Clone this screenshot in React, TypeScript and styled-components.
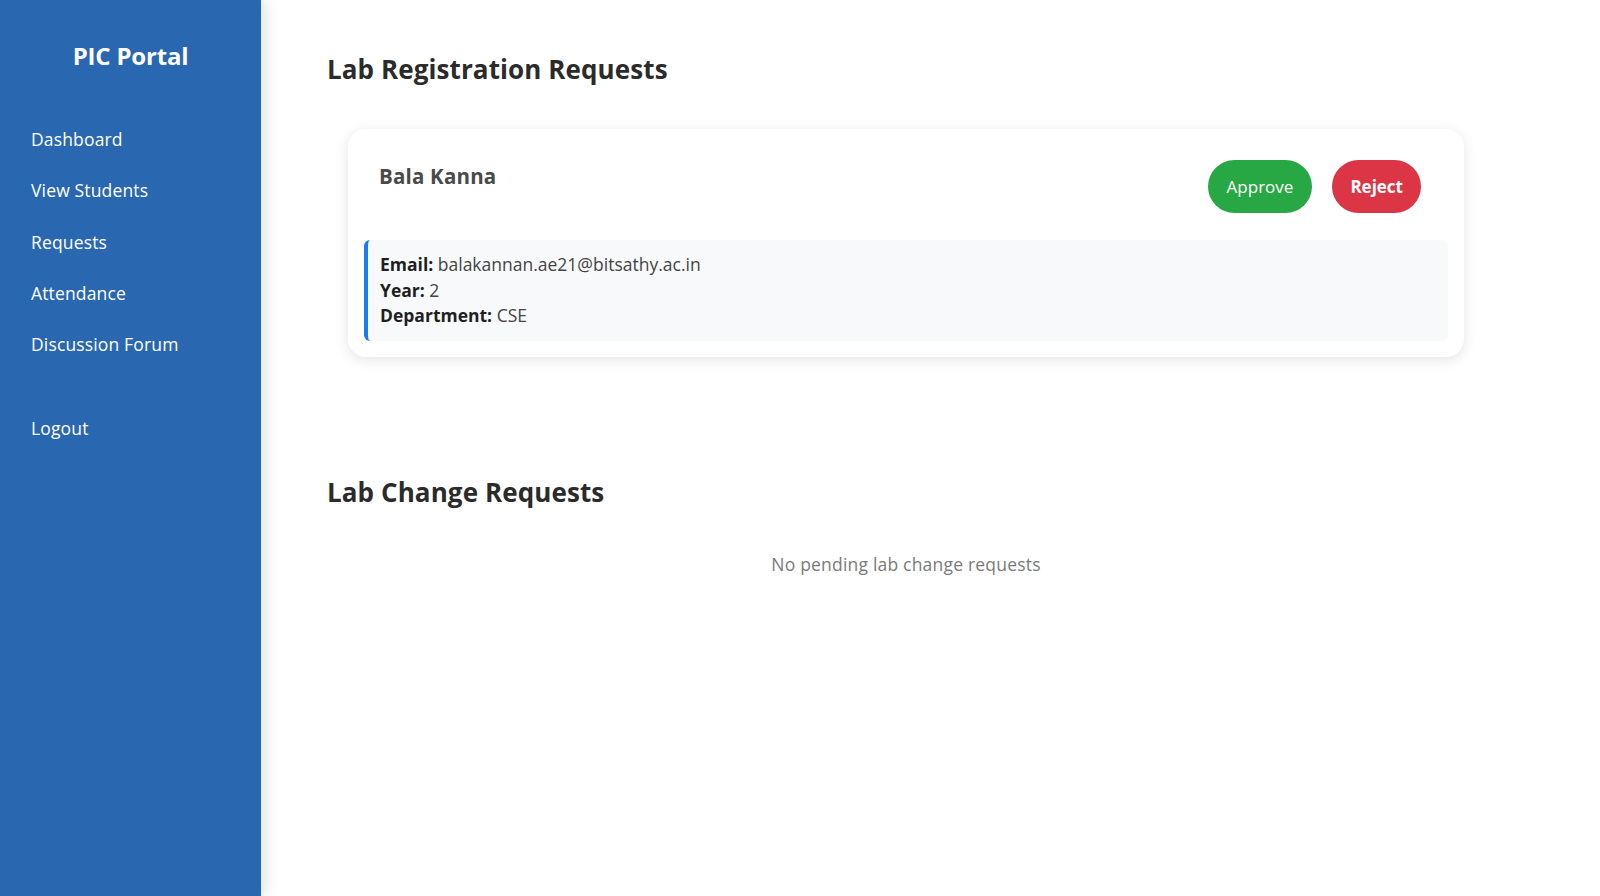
import styled, { createGlobalStyle } from 'styled-components';

const GlobalStyle = createGlobalStyle`
  * {
    box-sizing: border-box;
  }
  body {
    margin: 0;
    font-family: 'Open Sans', 'Liberation Sans', sans-serif;
    background: #ffffff;
  }
`;

const Layout = styled.div`
  display: flex;
  min-height: 896px;
`;

const Sidebar = styled.aside`
  width: 261px;
  flex-shrink: 0;
  background: #2a67b1;
  color: #ffffff;
  padding: 36px 0 0 31px;
  box-shadow: 4px 0 14px rgba(0, 0, 0, 0.12);
  position: relative;
  z-index: 1;
`;

const Brand = styled.h1`
  margin: 0 0 49px -31px;
  text-align: center;
  font-size: 24px;
  line-height: 40px;
  font-weight: 700;
  letter-spacing: -0.2px;
`;

const NavList = styled.nav`
  display: flex;
  flex-direction: column;
`;

const NavLink = styled.a<{ $spaced?: boolean }>`
  display: block;
  color: #ffffff;
  text-decoration: none;
  font-size: 17.5px;
  line-height: 24px;
  height: 51.3px;
  padding-top: 2px;
  margin-top: ${({ $spaced }) => ($spaced ? '33px' : '0')};
  letter-spacing: 0.15px;
`;

const Main = styled.main`
  flex: 1;
  padding: 49px 115px 40px 66px;
`;

const Section = styled.section`
  margin-bottom: 115px;
`;

const SectionTitle = styled.h2`
  margin: 0 0 40px;
  font-size: 26px;
  line-height: 40px;
  font-weight: 700;
  color: #2b2b2b;
  letter-spacing: 0.1px;
`;

const Card = styled.div`
  margin: 0 21px;
  background: #ffffff;
  border-radius: 18px;
  box-shadow: 0 3px 14px rgba(0, 0, 0, 0.11);
  padding: 16px;
`;

const CardHeader = styled.div`
  display: flex;
  justify-content: space-between;
  align-items: flex-start;
  padding: 15px 27px 15px 15px;
  margin-bottom: 12px;
`;

const StudentName = styled.h3`
  margin: 3px 0 0;
  font-size: 20.5px;
  line-height: 26px;
  font-weight: 700;
  color: #4a4a4a;
  letter-spacing: 0.2px;
`;

const Actions = styled.div`
  display: flex;
  gap: 20px;
`;

const ActionButton = styled.button<{ $tone: 'approve' | 'reject' }>`
  border: none;
  border-radius: 27px;
  height: 53px;
  padding: 0 ${({ $tone }) => ($tone === 'approve' ? '19px' : '18px')};
  font-family: inherit;
  font-size: 17px;
  color: #ffffff;
  cursor: pointer;
  background: ${({ $tone }) => ($tone === 'approve' ? '#28a745' : '#dc3545')};
  font-weight: ${({ $tone }) => ($tone === 'approve' ? 400 : 700)};
`;

const InfoBox = styled.div`
  background: #f8f9fa;
  border-left: 4px solid #1a7cf0;
  border-radius: 6px;
  padding: 12px;
`;

const InfoLine = styled.p`
  margin: 0;
  font-size: 17.5px;
  line-height: 25.5px;
  color: #444444;
`;

const Label = styled.strong`
  color: #1f1f1f;
  font-weight: 700;
`;

const EmptyText = styled.p`
  margin: 1px 0 0;
  text-align: center;
  font-size: 17.5px;
  line-height: 24px;
  color: #7a7a7a;
  letter-spacing: 0.2px;
`;

const navItems = ['Dashboard', 'View Students', 'Requests', 'Attendance', 'Discussion Forum'];

export default function App() {
  return (
    <>
      <GlobalStyle />
      <Layout>
        <Sidebar>
          <Brand>PIC Portal</Brand>
          <NavList>
            {navItems.map((item) => (
              <NavLink key={item} href="#">
                {item}
              </NavLink>
            ))}
            <NavLink href="#" $spaced>
              Logout
            </NavLink>
          </NavList>
        </Sidebar>
        <Main>
          <Section>
            <SectionTitle>Lab Registration Requests</SectionTitle>
            <Card>
              <CardHeader>
                <StudentName>Bala Kanna</StudentName>
                <Actions>
                  <ActionButton $tone="approve">Approve</ActionButton>
                  <ActionButton $tone="reject">Reject</ActionButton>
                </Actions>
              </CardHeader>
              <InfoBox>
                <InfoLine>
                  <Label>Email:</Label> balakannan.ae21@bitsathy.ac.in
                </InfoLine>
                <InfoLine>
                  <Label>Year:</Label> 2
                </InfoLine>
                <InfoLine>
                  <Label>Department:</Label> CSE
                </InfoLine>
              </InfoBox>
            </Card>
          </Section>
          <Section>
            <SectionTitle>Lab Change Requests</SectionTitle>
            <EmptyText>No pending lab change requests</EmptyText>
          </Section>
        </Main>
      </Layout>
    </>
  );
}
